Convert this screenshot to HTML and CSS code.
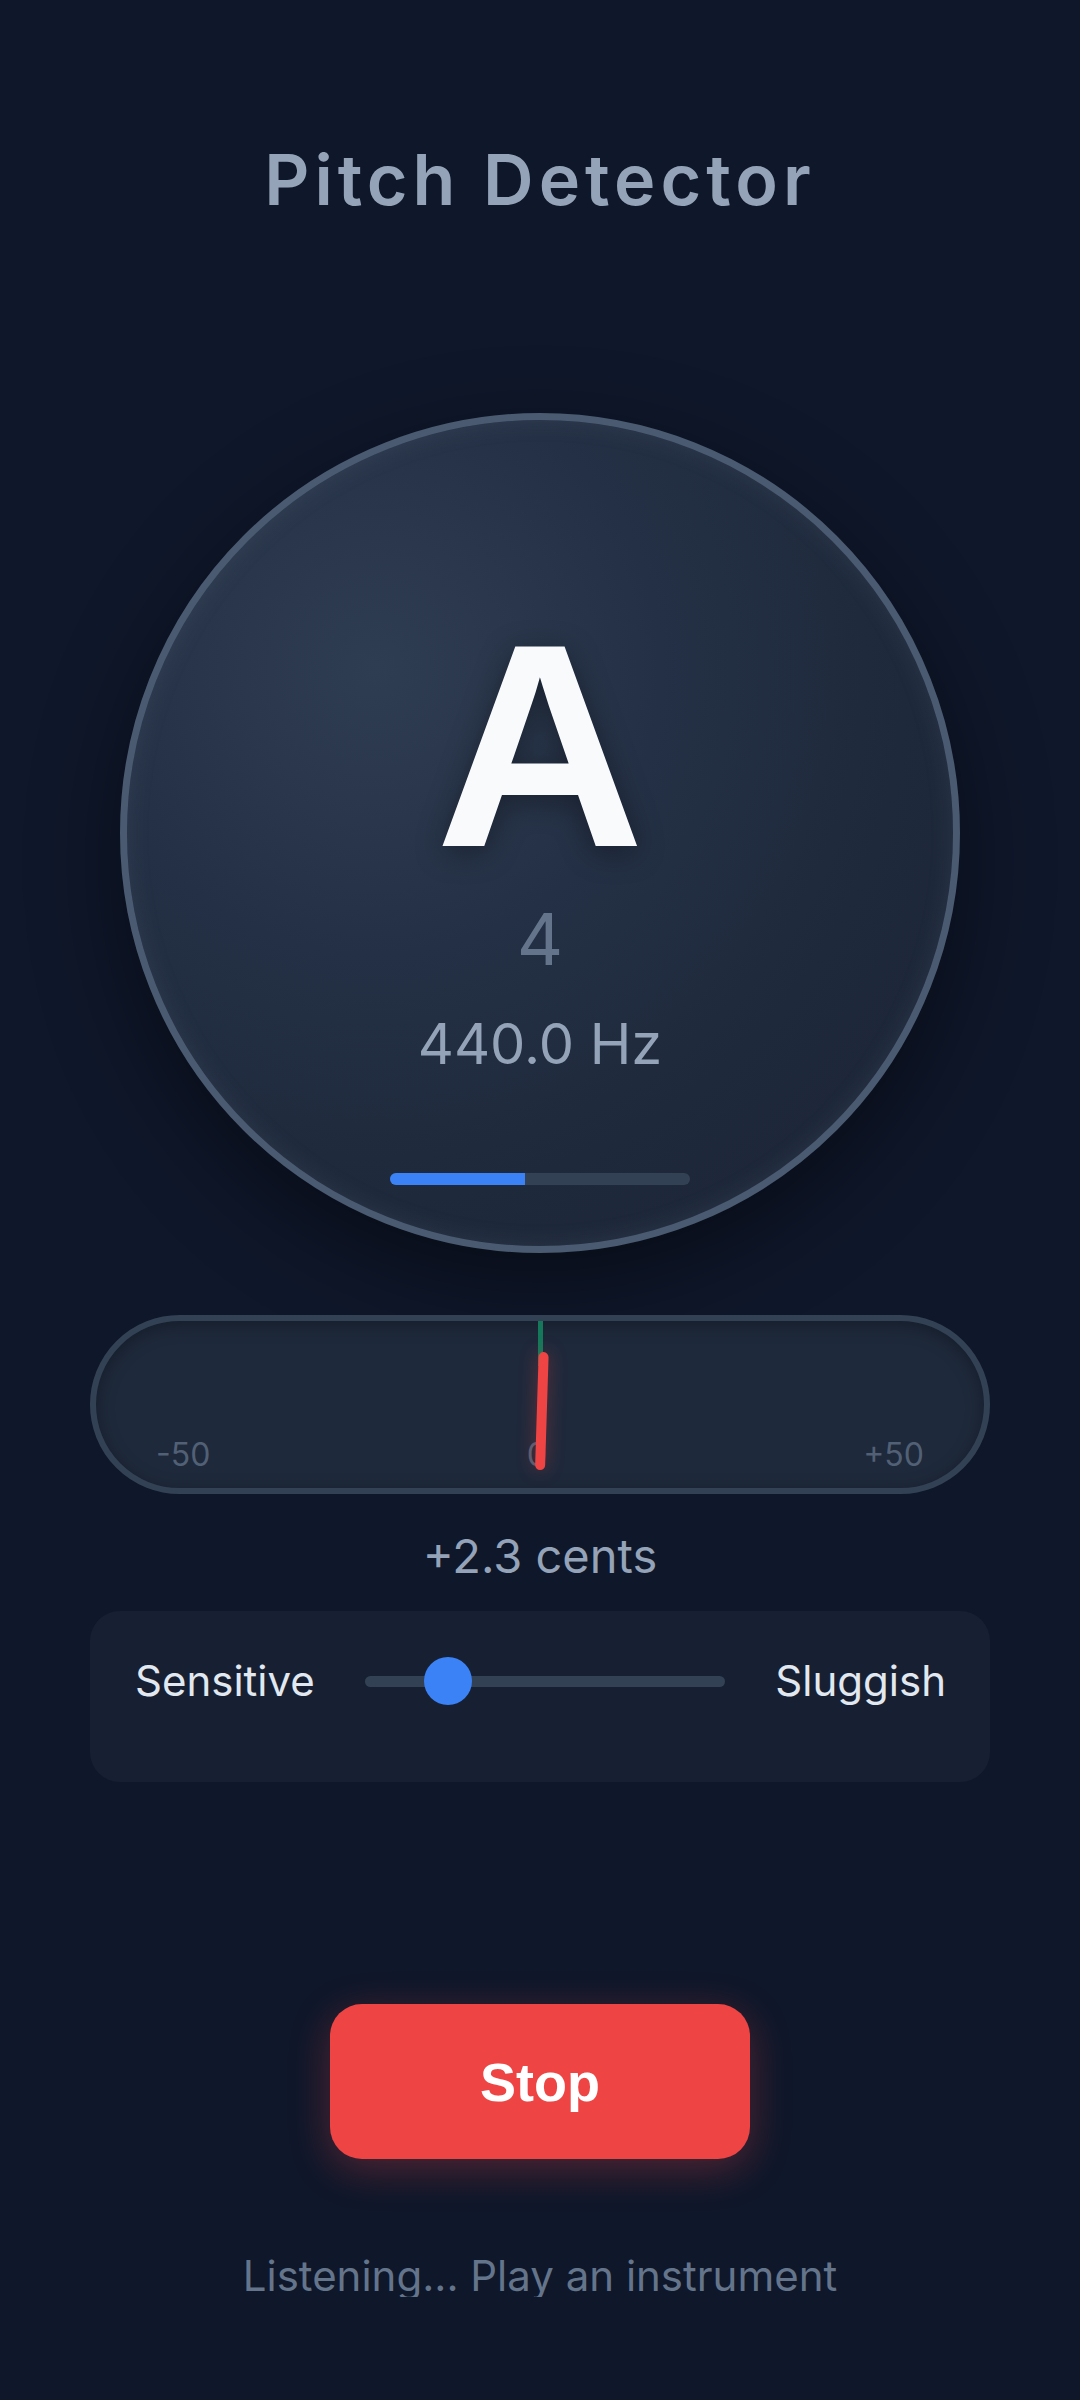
FILE: index.html
```html
<!DOCTYPE html>
<html lang="en">
  <head>
    <meta charset="UTF-8" />
    <meta name="viewport" content="width=device-width, initial-scale=1.0" />
    <title>Pitch Detector</title>
    <link rel="stylesheet" href="styles.css">
  </head>
  <body>
    <div class="app">
      <h1 class="title">Pitch Detector</h1>

      <div class="dial">
        <div class="note">A</div>
        <div class="octave">4</div>
        <div class="freq">440.0 Hz</div>
        <div class="level"><div class="level-fill" style="width: 45%"></div></div>
      </div>

      <div class="meter">
        <div class="meter-mark"></div>
        <div class="needle" style="transform: rotate(1.8deg)"></div>
        <span class="meter-label">-50</span>
        <span class="meter-label">0</span>
        <span class="meter-label">+50</span>
      </div>

      <div class="cents">+2.3 cents</div>

      <div class="smoothing">
        <span class="smoothing-label">Sensitive</span>
        <input class="smoothing-range" type="range" min="0" max="100" value="19" />
        <span class="smoothing-label">Sluggish</span>
      </div>

      <button class="stop-btn">Stop</button>

      <p class="status">Listening... Play an instrument</p>
    </div>
  </body>
</html>
```

FILE: styles.css
```css
body {
  margin: 0;
  background-color: #0f172a;
  font-family: Inter, "Noto Sans", sans-serif;
  color: #e2e8f0;
}
.app {
  width: 900px;
  margin: 0 auto;
  padding-top: 145px;
  display: flex;
  flex-direction: column;
  align-items: center;
}
.title {
  margin: 0;
  font-size: 70px;
  line-height: 1;
  font-weight: 600;
  letter-spacing: 5px;
  color: #94a3b8;
}

/* note dial */
.dial {
  margin-top: 198px;
  width: 840px;
  height: 840px;
  box-sizing: border-box;
  border: 7px solid #4a5a70;
  border-radius: 50%;
  padding-top: 180px;
  display: flex;
  flex-direction: column;
  align-items: center;
  background: radial-gradient(circle at 30% 30%, #2f3d52 0%, #243045 35%, #1e293b 65%, #1b2436 100%);
  box-shadow: 0 30px 90px rgba(0, 0, 0, 0.45), inset 0 0 24px rgba(148, 163, 184, 0.12);
}
.note {
  font-family: "Liberation Sans", Arial, sans-serif;
  font-weight: 700;
  font-size: 290px;
  line-height: 1;
  color: #f8fafc;
  text-shadow: 0 6px 30px rgba(0, 0, 0, 0.35);
}
.octave {
  margin-top: 13px;
  font-size: 72px;
  line-height: 1;
  font-weight: 400;
  color: #64748b;
}
.freq {
  margin-top: 41px;
  font-size: 56px;
  line-height: 1;
  color: #94a3b8;
}
.level {
  margin-top: 101px;
  width: 300px;
  height: 12px;
  border-radius: 6px;
  background-color: #334155;
  overflow: hidden;
}
.level-fill {
  height: 100%;
  background-color: #3b82f6;
}

/* cents meter */
.meter {
  position: relative;
  margin-top: 62px;
  width: 100%;
  height: 179px;
  box-sizing: border-box;
  border: 6px solid #334155;
  border-radius: 90px;
  background-color: #1e293b;
  box-shadow: inset 0 4px 18px rgba(0, 0, 0, 0.3);
  display: flex;
  align-items: flex-end;
  justify-content: space-between;
  padding: 0 60px 17px;
}
.meter-label {
  font-size: 32px;
  line-height: 1;
  color: #526075;
}
.meter-mark {
  position: absolute;
  left: 50%;
  top: 0;
  width: 5px;
  height: 45px;
  margin-left: -2.5px;
  background-color: #15785a;
}
.needle {
  position: absolute;
  left: 50%;
  top: 31px;
  width: 10px;
  height: 118px;
  margin-left: -5px;
  border-radius: 5px;
  background-color: #ef4444;
  transform-origin: 50% 100%;
  box-shadow: 0 0 18px rgba(239, 68, 68, 0.35);
}
.cents {
  margin-top: 38px;
  font-size: 47px;
  line-height: 1;
  color: #94a3b8;
}

/* smoothing card */
.smoothing {
  margin-top: 32px;
  width: 100%;
  box-sizing: border-box;
  padding: 46px 44px 77px 45px;
  border-radius: 30px;
  background-color: #172033;
  display: flex;
  align-items: center;
  gap: 50px;
}
.smoothing-label {
  font-size: 42px;
  line-height: 1;
  color: #e2e8f0;
}
.smoothing-range {
  flex: 1;
  margin: 0;
  height: 48px;
  background: transparent;
  -webkit-appearance: none;
  appearance: none;
}
.smoothing-range::-webkit-slider-runnable-track {
  height: 11px;
  border-radius: 6px;
  background-color: #334155;
}
.smoothing-range::-webkit-slider-thumb {
  -webkit-appearance: none;
  width: 48px;
  height: 48px;
  margin-top: -18.5px;
  border-radius: 50%;
  background-color: #3b82f6;
  border: none;
}

.stop-btn {
  margin-top: 222px;
  width: 420px;
  height: 155px;
  border: none;
  border-radius: 32px;
  background-color: #ef4444;
  color: white;
  font-family: "Liberation Sans", Arial, sans-serif;
  font-weight: 700;
  font-size: 54px;
  cursor: pointer;
  box-shadow: 0 10px 40px rgba(239, 68, 68, 0.3);
}
.status {
  margin: 96px 0 0;
  font-size: 42px;
  line-height: 1;
  color: #64748b;
}
```
